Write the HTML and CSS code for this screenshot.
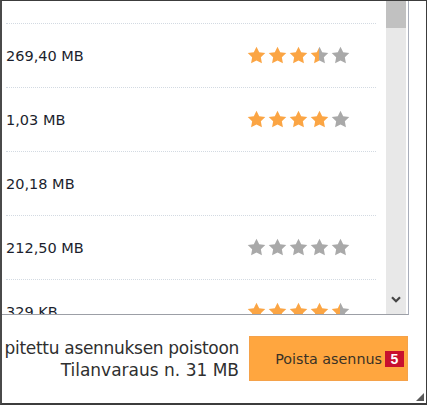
FILE: index.html
```html
<!DOCTYPE html>
<html lang="fi">
<head>
<meta charset="utf-8">
<title>Poista asennus</title>
<link rel="stylesheet" href="styles.css">
</head>
<body>
<svg width="0" height="0" class="defs" aria-hidden="true">
  <defs>
    <symbol id="star" viewBox="0 0 24 24"><path d="M12 0.8l3.4 7 7.7 1.1-5.6 5.4 1.35 7.6L12 18.3l-6.85 3.6 1.35-7.6L0.9 8.9l7.7-1.1z"/></symbol>
    <linearGradient id="halfgrad" x1="0" x2="1" y1="0" y2="0">
      <stop offset="0.5" stop-color="#fba544"/>
      <stop offset="0.5" stop-color="#a9a9a9"/>
    </linearGradient>
  </defs>
</svg>
<div class="window">
  <div class="listbox">
    <div class="rows">
      <div class="row partial"></div>
      <div class="row">
        <span class="size">269,40 MB</span>
        <span class="stars">
          <svg class="star on"><use href="#star"/></svg>
          <svg class="star on"><use href="#star"/></svg>
          <svg class="star on"><use href="#star"/></svg>
          <svg class="star half"><use href="#star"/></svg>
          <svg class="star off"><use href="#star"/></svg>
        </span>
      </div>
      <div class="row">
        <span class="size">1,03 MB</span>
        <span class="stars">
          <svg class="star on"><use href="#star"/></svg>
          <svg class="star on"><use href="#star"/></svg>
          <svg class="star on"><use href="#star"/></svg>
          <svg class="star on"><use href="#star"/></svg>
          <svg class="star off"><use href="#star"/></svg>
        </span>
      </div>
      <div class="row">
        <span class="size">20,18 MB</span>
      </div>
      <div class="row">
        <span class="size">212,50 MB</span>
        <span class="stars">
          <svg class="star off"><use href="#star"/></svg>
          <svg class="star off"><use href="#star"/></svg>
          <svg class="star off"><use href="#star"/></svg>
          <svg class="star off"><use href="#star"/></svg>
          <svg class="star off"><use href="#star"/></svg>
        </span>
      </div>
      <div class="row">
        <span class="size">329 KB</span>
        <span class="stars">
          <svg class="star on"><use href="#star"/></svg>
          <svg class="star on"><use href="#star"/></svg>
          <svg class="star on"><use href="#star"/></svg>
          <svg class="star on"><use href="#star"/></svg>
          <svg class="star half"><use href="#star"/></svg>
        </span>
      </div>
    </div>
    <div class="scrollbar">
      <div class="thumb"></div>
      <div class="track"></div>
      <div class="arrow">
        <svg width="10" height="7" viewBox="0 0 10 7"><path d="M1 1.2L5 5.2 9 1.2" fill="none" stroke="#454545" stroke-width="2.2"/></svg>
      </div>
    </div>
  </div>
  <div class="footer">
    <div class="info">
      <div class="tight">pitettu asennuksen poistoon</div>
      <div>Tilanvaraus n. 31 MB</div>
    </div>
    <button class="uninstall">Poista asennus<span class="badge">5</span></button>
  </div>
  <div class="grip"></div>
</div>
</body>
</html>
```
FILE: styles.css
```css
html, body {
  margin: 0;
  padding: 0;
  background: #ffffff;
}

.defs {
  position: absolute;
  width: 0;
  height: 0;
}

.window {
  position: relative;
  box-sizing: border-box;
  width: 427px;
  height: 405px;
  border-top: 1px solid #3c3c3c;
  border-left: 2px solid #4a4a4a;
  border-right: 1px solid #3c3c3c;
  border-bottom: 2px solid #3c3c3c;
  overflow: hidden;
  display: flex;
  flex-direction: column;
  font-family: "DejaVu Sans", Verdana, sans-serif;
}

.listbox {
  display: flex;
  height: 313px;
  margin-right: 17px;
  border-right: 1px solid #a9aebb;
  border-bottom: 1px solid #9c9fa6;
  flex-shrink: 0;
  overflow: hidden;
}

.rows {
  flex: 1;
  padding-left: 4px;
  padding-right: 10px;
  overflow: hidden;
}

.row {
  box-sizing: border-box;
  height: 64px;
  display: flex;
  align-items: center;
  border-bottom: 1px dotted #d3dae2;
}

.row.partial {
  height: 23px;
}

.size {
  width: 241px;
  flex-shrink: 0;
  font-size: 14.5px;
  color: #1c1f2e;
}

.stars {
  display: flex;
  gap: 2px;
}

.star {
  width: 19px;
  height: 19px;
}

.star.on { fill: #fba544; }
.star.off { fill: #a9a9a9; }
.star.half { fill: url(#halfgrad); }

.scrollbar {
  width: 20px;
  margin-right: 2px;
  background: #e8e8e8;
  display: flex;
  flex-direction: column;
}

.thumb {
  height: 27px;
  background: #c1c1c1;
}

.track {
  flex: 1;
}

.arrow {
  height: 28px;
  display: flex;
  align-items: center;
  justify-content: center;
  padding-bottom: 2px;
  box-sizing: border-box;
}

.footer {
  flex: 1;
  display: flex;
  justify-content: flex-end;
  align-items: center;
  padding-right: 18px;
  gap: 10px;
  padding-bottom: 1px;
}

.info {
  flex-shrink: 0;
  text-align: right;
  white-space: nowrap;
  font-size: 17px;
  line-height: 22px;
  color: #2f2f2f;
}

.tight {
  letter-spacing: -0.3px;
}

.uninstall {
  flex-shrink: 0;
  box-sizing: border-box;
  width: 159px;
  height: 45px;
  border: 1px solid #f5a24a;
  background: #ffa63f;
  font-family: inherit;
  font-size: 14.3px;
  color: #3a3226;
  display: flex;
  align-items: center;
  justify-content: flex-end;
  padding: 0 3px 0 0;
  gap: 3px;
}

.badge {
  display: inline-flex;
  align-items: center;
  justify-content: center;
  width: 19px;
  height: 16px;
  background: #c8102e;
  color: #ffffff;
  font-weight: bold;
  font-size: 14px;
  font-family: "Liberation Sans", Arial, sans-serif;
}

.grip {
  position: absolute;
  right: 2px;
  bottom: 2px;
  width: 0;
  height: 0;
  border-left: 8px solid transparent;
  border-bottom: 8px solid #5a5a5a;
}
```
